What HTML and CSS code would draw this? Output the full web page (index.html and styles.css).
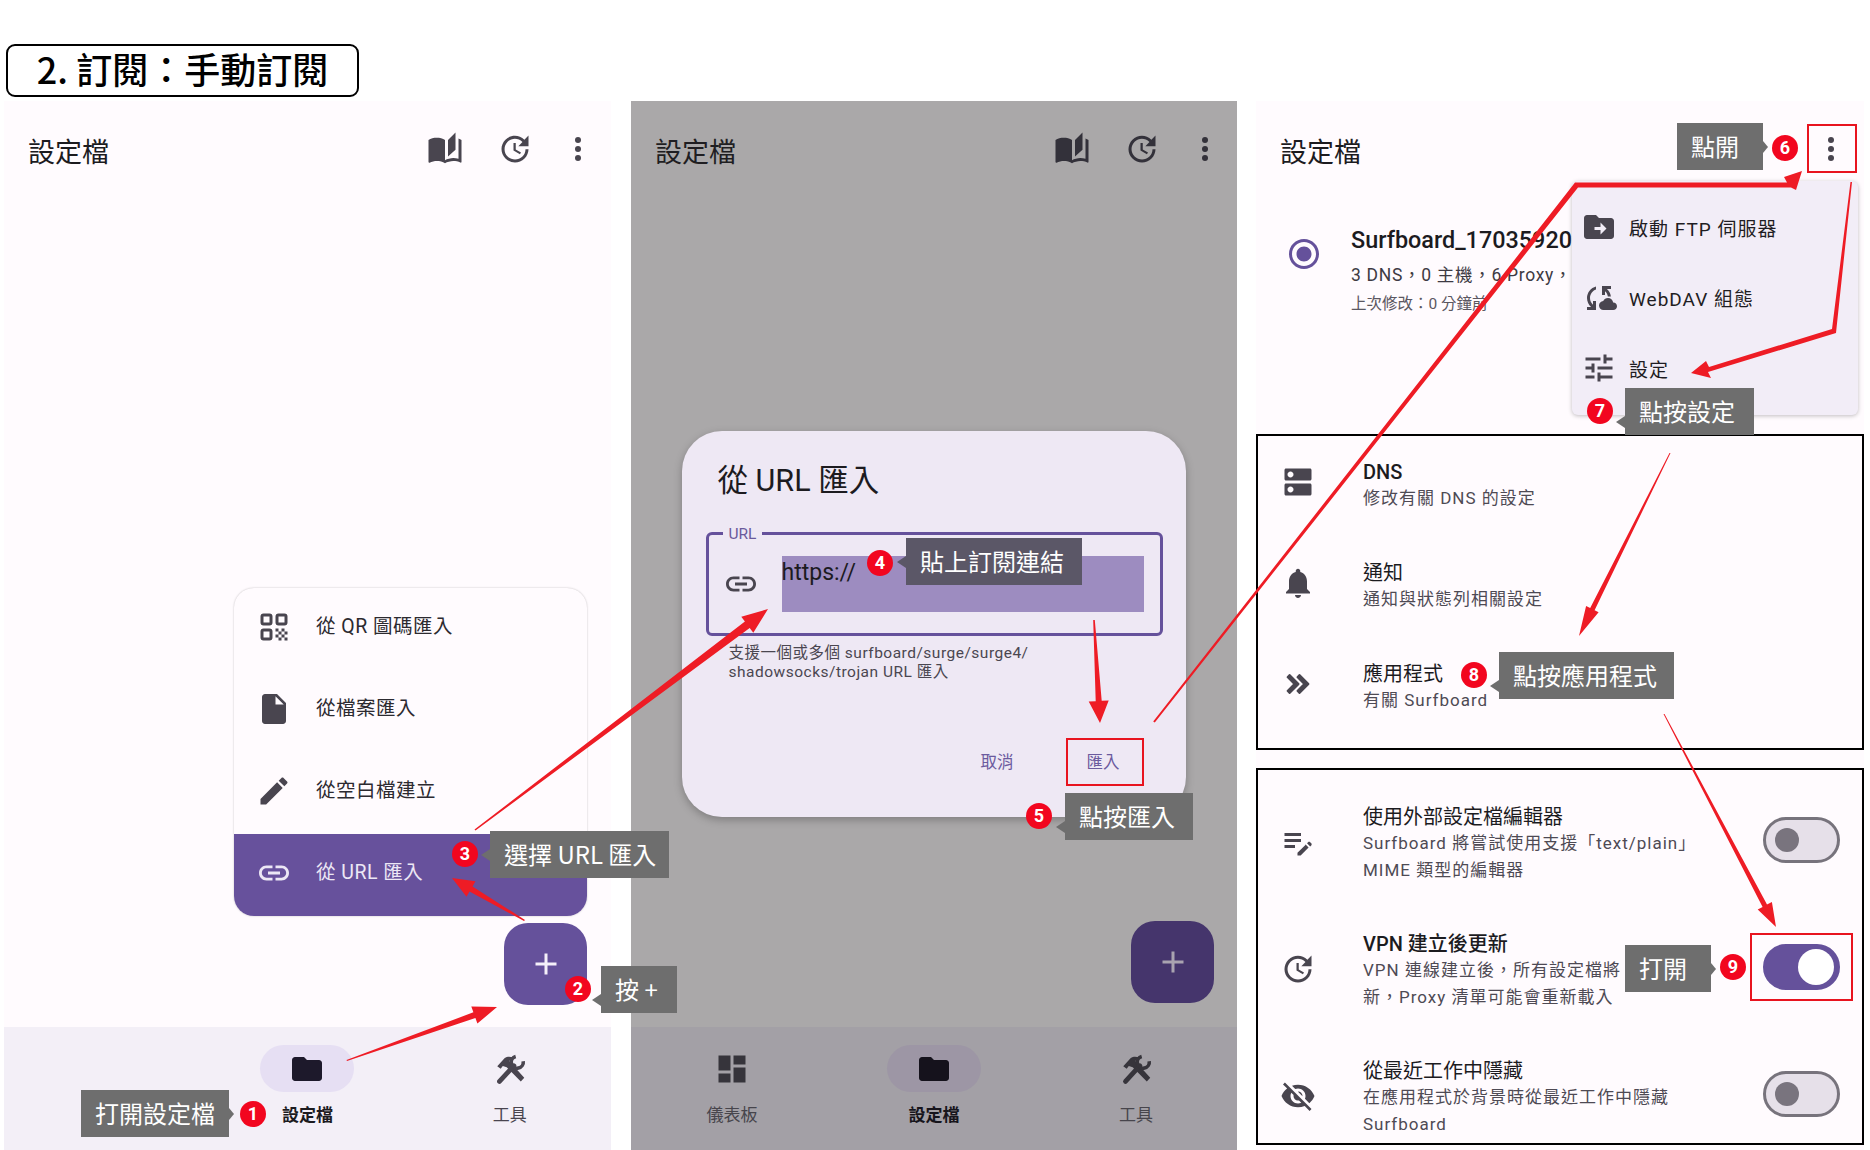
FILE: index.html
```html
<!DOCTYPE html>
<html lang="zh-Hant">
<head>
	<meta charset="utf-8">
	<title>訂閱：手動訂閱</title>
	<link rel="stylesheet" href="styles.css">
</head>
<body>
<svg class="defs" width="0" height="0">
	<symbol id="i-book" viewBox="0 0 24 24"><path d="M19 1l-5 5v11l5-4.5V1zM1 6v14.65c0 .25.25.5.5.5.1 0 .15-.05.25-.05C3.1 20.45 5.05 20 6.5 20c1.95 0 4.05.4 5.5 1.5V6c-1.45-1.1-3.55-1.5-5.5-1.5S2.45 4.9 1 6zm22 13.5V6c-.6-.45-1.25-.8-2-1.05v13.5c-1.1-.35-2.3-.5-3.5-.5-1.7 0-4.15.65-5.5 1.5v2.05c1.35-.85 3.8-1.5 5.5-1.5 1.65 0 3.35.3 4.75 1.05.1.05.15.05.25.05.25 0 .5-.25.5-.5V19.5z"/></symbol>
	<symbol id="i-update" viewBox="0 0 24 24"><path d="M21 10.12h-6.78l2.74-2.82c-2.73-2.7-7.15-2.8-9.88-.1-2.73 2.71-2.73 7.08 0 9.79s7.15 2.71 9.88 0C18.32 15.65 19 14.08 19 12.1h2c0 1.98-.88 4.55-2.64 6.29-3.51 3.48-9.21 3.48-12.72 0-3.5-3.47-3.53-9.11-.02-12.58s9.14-3.47 12.65 0L21 3v7.12zM12.5 8v4.25l3.5 2.08-.72 1.21L11 13V8h1.5z"/></symbol>
	<symbol id="i-more" viewBox="0 0 24 24"><circle cx="12" cy="6" r="2"/><circle cx="12" cy="12" r="2"/><circle cx="12" cy="18" r="2"/></symbol>
	<symbol id="i-qr" viewBox="0 0 24 24"><g fill="none" stroke="currentColor" stroke-width="2"><rect x="4" y="4" width="6" height="6" rx="1"/><rect x="14" y="4" width="6" height="6" rx="1"/><rect x="4" y="14" width="6" height="6" rx="1"/></g><path d="M13 13h2v2h-2zM17 13h2v2h-2zM15 15h2v2h-2zM19 15h2v2h-2zM13 17h2v2h-2zM17 17h2v2h-2zM15 19h2v2h-2zM19 19h2v2h-2z"/></symbol>
	<symbol id="i-file" viewBox="0 0 24 24"><path d="M6 2c-1.1 0-1.99.9-1.99 2L4 20c0 1.1.89 2 1.99 2H18c1.1 0 2-.9 2-2V8l-6-6H6zm7 7V3.5L18.5 9H13z"/></symbol>
	<symbol id="i-edit" viewBox="0 0 24 24"><path d="M3 17.25V21h3.75L17.81 9.94l-3.75-3.75L3 17.25zM20.71 7.04c.39-.39.39-1.02 0-1.41l-2.34-2.34c-.39-.39-1.02-.39-1.41 0l-1.83 1.83 3.75 3.75 1.83-1.83z"/></symbol>
	<symbol id="i-link" viewBox="0 0 24 24"><path d="M3.9 12c0-1.71 1.39-3.1 3.1-3.1h4V7H7c-2.76 0-5 2.24-5 5s2.24 5 5 5h4v-1.9H7c-1.71 0-3.1-1.39-3.1-3.1zM8 13h8v-2H8v2zm9-6h-4v1.9h4c1.71 0 3.1 1.39 3.1 3.1s-1.39 3.1-3.1 3.1h-4V17h4c2.76 0 5-2.24 5-5s-2.24-5-5-5z"/></symbol>
	<symbol id="i-plus" viewBox="0 0 24 24"><path d="M19 13h-6v6h-2v-6H5v-2h6V5h2v6h6v2z"/></symbol>
	<symbol id="i-folder" viewBox="0 0 24 24"><path d="M10 4H4c-1.1 0-1.99.9-1.99 2L2 18c0 1.1.9 2 2 2h16c1.1 0 2-.9 2-2V8c0-1.1-.9-2-2-2h-8l-2-2z"/></symbol>
	<symbol id="i-tools" viewBox="0 0 24 24"><path d="M3.5 10.2 8.5 4.6C10 3.6 12 3.6 14 4.2l-2.4 2.4.9 1.2 9 10-2.3 2.6-9.4-9.6-2.6-.8-1.4 1.8z"/><path d="M5 20.3 14.6 9.8" fill="none" stroke="currentColor" stroke-width="3.2" stroke-linecap="round"/><path d="M20.8 6.8a4 4 0 1 1-5-3.2" fill="none" stroke="currentColor" stroke-width="2.4"/></symbol>
	<symbol id="i-dash" viewBox="0 0 24 24"><path d="M3 13h8V3H3v10zm0 8h8v-6H3v6zm10 0h8V11h-8v10zm0-18v6h8V3h-8z"/></symbol>
	<symbol id="i-radio" viewBox="0 0 24 24"><path d="M12 7c-2.76 0-5 2.24-5 5s2.24 5 5 5 5-2.24 5-5-2.24-5-5-5zm0-5C6.48 2 2 6.48 2 12s4.48 10 10 10 10-4.48 10-10S17.52 2 12 2zm0 18c-4.42 0-8-3.58-8-8s3.58-8 8-8 8 3.58 8 8-3.58 8-8 8z"/></symbol>
	<symbol id="i-move" viewBox="0 0 24 24"><path d="M20 6h-8l-2-2H4c-1.1 0-1.99.9-1.99 2L2 18c0 1.1.9 2 2 2h16c1.1 0 2-.9 2-2V8c0-1.1-.9-2-2-2zm-7 11v-3H9v-2h4V9l4 4-4 4z"/></symbol>
	<symbol id="i-cloud" viewBox="0 0 24 24"><path d="M21.5 14.98c-.02 0-.03 0-.05.01C21.2 13.3 19.76 12 18 12c-1.4 0-2.6.83-3.16 2.02C13.26 14.1 12 15.4 12 17c0 1.66 1.34 3 3 3l6.5-.02c1.38 0 2.5-1.12 2.5-2.5s-1.12-2.5-2.5-2.5zM10 4.26v2.09C7.67 7.18 6 9.39 6 12c0 1.77.78 3.34 2 4.44V14h2v6H4v-2h2.73C5.06 16.54 4 14.4 4 12c0-3.73 2.55-6.85 6-7.74zM20 6h-2.73c1.43 1.26 2.41 3.01 2.66 5l-2.02.01c-.23-1.36-.93-2.55-1.91-3.46V10h-2V4h6v2z"/></symbol>
	<symbol id="i-tune" viewBox="0 0 24 24"><path d="M3 17v2h6v-2H3zM3 5v2h10V5H3zm10 16v-2h8v-2h-8v-2h-2v6h2zM7 9v2H3v2h4v2h2V9H7zm14 4v-2H11v2h10zm-6-4h2V7h4V5h-4V3h-2v6z"/></symbol>
	<symbol id="i-dns" viewBox="0 0 24 24"><path d="M20 13H4c-.55 0-1 .45-1 1v6c0 .55.45 1 1 1h16c.55 0 1-.45 1-1v-6c0-.55-.45-1-1-1zM7 19c-1.1 0-2-.9-2-2s.9-2 2-2 2 .9 2 2-.9 2-2 2zM20 3H4c-.55 0-1 .45-1 1v6c0 .55.45 1 1 1h16c.55 0 1-.45 1-1V4c0-.55-.45-1-1-1zM7 9c-1.1 0-2-.9-2-2s.9-2 2-2 2 .9 2 2-.9 2-2 2z"/></symbol>
	<symbol id="i-bell" viewBox="0 0 24 24"><path d="M12 22c1.1 0 2-.9 2-2h-4c0 1.1.89 2 2 2zm6-6v-5c0-3.07-1.64-5.64-4.5-6.32V4c0-.83-.67-1.5-1.5-1.5s-1.5.67-1.5 1.5v.68C7.63 5.36 6 7.92 6 11v5l-2 2v1h16v-1l-2-2z"/></symbol>
	<symbol id="i-chevrons" viewBox="0 0 24 24"><path d="M6.41 6 5 7.41 9.58 12 5 16.59 6.41 18l6-6z M13 6l-1.41 1.41L16.17 12l-4.58 4.59L13 18l6-6z" stroke="currentColor" stroke-width="1.2" stroke-linejoin="round"/></symbol>
	<symbol id="i-note" viewBox="0 0 24 24"><path d="M3 10h11v2H3v-2zm0-2h11V6H3v2zm0 8h7v-2H3v2zm15.01-3.13.71-.71c.39-.39 1.02-.39 1.41 0l.71.71c.39.39.39 1.02 0 1.41l-.71.71-2.12-2.12zm-1.06 1.06-5.3 5.3V21h2.12l5.3-5.3-2.12-2.12z"/></symbol>
	<symbol id="i-eye-off" viewBox="0 0 24 24"><path d="M12 7c2.76 0 5 2.24 5 5 0 .65-.13 1.26-.36 1.83l2.92 2.92c1.51-1.26 2.7-2.89 3.43-4.75-1.73-4.39-6-7.5-11-7.5-1.4 0-2.74.25-3.98.7l2.16 2.16C10.74 7.13 11.35 7 12 7zM2 4.27l2.28 2.28.46.46C3.08 8.3 1.78 10.02 1 12c1.73 4.39 6 7.5 11 7.5 1.55 0 3.03-.3 4.38-.84l.42.42L19.73 22 21 20.73 3.27 3 2 4.27zM7.53 9.8l1.55 1.55c-.05.21-.08.43-.08.65 0 1.66 1.34 3 3 3 .22 0 .44-.03.65-.08l1.55 1.55c-.67.33-1.41.53-2.2.53-2.76 0-5-2.24-5-5 0-.79.2-1.53.53-2.2zm4.31-.78l3.15 3.15.02-.16c0-1.66-1.34-3-3-3l-.17.01z"/></symbol>
</svg>

<div class="page">
	<h1 class="step-title">2. 訂閱：手動訂閱</h1>

	<div class="screens">
		<!-- screen 1: add menu -->
		<section class="screen">
			<header class="appbar">
				<span class="appbar-title">設定檔</span>
				<div class="appbar-icons">
					<svg class="icon icon-book"><use href="#i-book"/></svg>
					<svg class="icon"><use href="#i-update"/></svg>
					<svg class="icon"><use href="#i-more"/></svg>
				</div>
			</header>
			<div class="content content-end">
				<div class="add-menu">
					<div class="add-item"><svg class="icon"><use href="#i-qr"/></svg><span>從 QR 圖碼匯入</span></div>
					<div class="add-item"><svg class="icon"><use href="#i-file"/></svg><span>從檔案匯入</span></div>
					<div class="add-item"><svg class="icon"><use href="#i-edit"/></svg><span>從空白檔建立</span></div>
					<div class="add-item add-item-on"><svg class="icon"><use href="#i-link"/></svg><span>從 URL 匯入</span></div>
				</div>
				<div class="fab"><svg class="icon"><use href="#i-plus"/></svg></div>
			</div>
			<nav class="navbar">
				<div class="nav-item"></div>
				<div class="nav-item nav-item-on"><div class="nav-pill"><svg class="icon"><use href="#i-folder"/></svg></div><span>設定檔</span></div>
				<div class="nav-item"><div class="nav-pill"><svg class="icon"><use href="#i-tools"/></svg></div><span>工具</span></div>
			</nav>
		</section>

		<!-- screen 2: dialog over dim -->
		<section class="screen screen-dim">
			<header class="appbar">
				<span class="appbar-title">設定檔</span>
				<div class="appbar-icons">
					<svg class="icon icon-book"><use href="#i-book"/></svg>
					<svg class="icon"><use href="#i-update"/></svg>
					<svg class="icon"><use href="#i-more"/></svg>
				</div>
			</header>
			<div class="content content-dialog">
				<div class="dialog">
					<div class="dialog-title">從 URL 匯入</div>
					<div class="field">
						<span class="field-label">URL</span>
						<svg class="icon"><use href="#i-link"/></svg>
						<div class="field-value">https://</div>
					</div>
					<p class="field-help">支援一個或多個 surfboard/surge/surge4/<br>shadowsocks/trojan URL 匯入</p>
					<div class="dialog-actions"><span>取消</span><span>匯入</span></div>
				</div>
				<div class="fab"><svg class="icon"><use href="#i-plus"/></svg></div>
			</div>
			<nav class="navbar">
				<div class="nav-item"><div class="nav-pill"><svg class="icon"><use href="#i-dash"/></svg></div><span>儀表板</span></div>
				<div class="nav-item nav-item-on"><div class="nav-pill"><svg class="icon"><use href="#i-folder"/></svg></div><span>設定檔</span></div>
				<div class="nav-item"><div class="nav-pill"><svg class="icon"><use href="#i-tools"/></svg></div><span>工具</span></div>
			</nav>
		</section>

		<!-- screen 3: settings crops -->
		<section class="screen screen-settings">
			<header class="appbar">
				<span class="appbar-title">設定檔</span>
				<div class="appbar-icons">
					<svg class="icon"><use href="#i-more"/></svg>
				</div>
			</header>
			<div class="profile">
				<svg class="icon icon-radio"><use href="#i-radio"/></svg>
				<div class="profile-text">
					<div class="profile-name">Surfboard_1703592000</div>
					<div class="profile-sub">3 DNS，0 主機，6 Proxy，</div>
					<div class="profile-meta">上次修改：0 分鐘前</div>
				</div>
			</div>
			<div class="overflow-menu">
				<div class="overflow-item"><svg class="icon"><use href="#i-move"/></svg><span>啟動 FTP 伺服器</span></div>
				<div class="overflow-item"><svg class="icon"><use href="#i-cloud"/></svg><span>WebDAV 組態</span></div>
				<div class="overflow-item"><svg class="icon"><use href="#i-tune"/></svg><span>設定</span></div>
			</div>

			<div class="panel panel-top">
				<div class="row"><svg class="icon"><use href="#i-dns"/></svg><div class="row-text"><div class="row-title row-title-strong">DNS</div><div class="row-sub">修改有關 DNS 的設定</div></div></div>
				<div class="row"><svg class="icon"><use href="#i-bell"/></svg><div class="row-text"><div class="row-title">通知</div><div class="row-sub">通知與狀態列相關設定</div></div></div>
				<div class="row"><svg class="icon"><use href="#i-chevrons"/></svg><div class="row-text"><div class="row-title">應用程式</div><div class="row-sub">有關 Surfboard</div></div></div>
			</div>

			<div class="panel panel-bottom">
				<div class="row row-tall">
					<svg class="icon"><use href="#i-note"/></svg>
					<div class="row-text"><div class="row-title">使用外部設定檔編輯器</div><div class="row-sub">Surfboard 將嘗試使用支援「text/plain」<br>MIME 類型的編輯器</div></div>
					<div class="toggle"><span class="knob"></span></div>
				</div>
				<div class="row row-tall">
					<svg class="icon"><use href="#i-update"/></svg>
					<div class="row-text"><div class="row-title row-title-strong">VPN 建立後更新</div><div class="row-sub">VPN 連線建立後，所有設定檔將<br>新，Proxy 清單可能會重新載入</div></div>
					<div class="toggle toggle-on"><span class="knob"></span></div>
				</div>
				<div class="row row-tall">
					<svg class="icon"><use href="#i-eye-off"/></svg>
					<div class="row-text"><div class="row-title">從最近工作中隱藏</div><div class="row-sub">在應用程式於背景時從最近工作中隱藏<br>Surfboard</div></div>
					<div class="toggle"><span class="knob"></span></div>
				</div>
			</div>
		</section>
	</div>

	<!-- annotations drawn on top of the screenshots -->
	<svg class="arrows" width="1870" height="1150" viewBox="0 0 1870 1150">
		<polygon points="347,1061 475.4,1017.9 477.4,1023.6 497,1007 471.3,1006.6 473.4,1012.3 346.5,1060"/>
		<polygon points="525,920 472.5,886.4 475.5,881.2 452,878 466.5,896.8 469.5,891.6 524,921"/>
		<polygon points="475.5,830.5 749.7,627.9 753.3,632.7 768,609 741.3,616.7 744.9,621.5 474.5,829.5"/>
		<polygon points="1093.2,620 1095.7,701.2 1088.7,701.6 1100,723 1108.7,700.4 1101.7,700.8 1094.8,620"/>
		<polygon points="1153.2,721.5 1575,182.5 1787,182.5 1784,177 1802,171 1796,190 1791,187.5 1578,187.5 1154.8,722.5"/>
		<polygon points="1852,182 1836,333 1708,372 1711,378 1691,373 1706,361 1709,367 1832,329 1850.5,182"/>
		<polygon points="1670.5,453 1594.6,610.3 1598.6,612.3 1579,636 1586.1,606.1 1590.2,608.1 1669.5,453"/>
		<polygon points="1664.5,714 1767,904.6 1771.9,902.1 1776,927 1757.7,909.5 1762.6,907 1663.5,714"/>
	</svg>

	<div class="red-box red-import"></div>
	<div class="red-box red-more"></div>
	<div class="red-box red-toggle"></div>

	<div class="note note-1 point-right">打開設定檔</div><span class="badge badge-1">1</span>
	<div class="note note-2 point-left point-low">按 +</div><span class="badge badge-2">2</span>
	<div class="note note-3 point-left">選擇 URL 匯入</div><span class="badge badge-3">3</span>
	<div class="note note-4 point-left">貼上訂閱連結</div><span class="badge badge-4">4</span>
	<div class="note note-5 point-left point-low">點按匯入</div><span class="badge badge-5">5</span>
	<div class="note note-6 point-right">點開</div><span class="badge badge-6">6</span>
	<div class="note note-7 point-left point-low">點按設定</div><span class="badge badge-7">7</span>
	<div class="note note-8 point-left point-low">點按應用程式</div><span class="badge badge-8">8</span>
	<div class="note note-9 point-right">打開</div><span class="badge badge-9">9</span>
</div>
</body>
</html>
```

FILE: styles.css
```css
*{
	margin:0;
	padding:0;
	box-sizing:border-box;
}
body{
	background-color:#fff;
	font-family:Roboto,"Noto Sans CJK TC",sans-serif;
	color:#1c1b1f;
}
.defs{
	position:absolute;
}
.page{
	position:relative;
	width:1870px;
	height:1150px;
	overflow:hidden;
}
.icon{
	display:block;
	width:36px;
	height:36px;
	flex:none;
	fill:currentColor;
	color:#49454f;
}

/* title */
.step-title{
	width:353px;
	height:53px;
	margin:44px 0 4px 6px;
	padding-bottom:6px;
	border:2px solid #000;
	border-radius:9px;
	display:flex;
	align-items:center;
	justify-content:center;
	font-family:"Noto Sans CJK TC",sans-serif;
	font-size:36px;
	font-weight:500;
	line-height:1;
	color:#000;
	white-space:nowrap;
}

/* screens */
.screens{
	display:flex;
	gap:20px;
	margin-left:4px;
}
.screen{
	position:relative;
	width:607px;
	height:1049px;
	display:flex;
	flex-direction:column;
	background-color:#fffbfe;
}
.screen-dim{
	width:606px;
	background-color:#aaa8a9;
}
.screen-settings{
	width:608px;
	margin-left:-1px;
}
.appbar{
	height:100px;
	flex:none;
	display:flex;
	align-items:center;
	justify-content:space-between;
	padding:0 15px 0 24px;
}
.screen-dim .appbar{
	padding-right:14px;
}
.appbar-title{
	margin-top:4px;
	font-size:27px;
	line-height:36px;
}
.appbar-icons{
	display:flex;
	gap:27px;
	margin-top:-5px;
}
.icon-book{
	margin-right:7px;
}
.screen-dim .appbar-title{
	color:#1f1e22;
}
.screen-dim .appbar .icon{
	color:#33313a;
}
.content{
	flex:1;
	display:flex;
	flex-direction:column;
}
.content-end{
	align-items:flex-end;
	justify-content:flex-end;
	padding:0 24px 22px 0;
}
.content-dialog{
	align-items:center;
}

/* add menu */
.add-menu{
	width:353px;
	border-radius:20px;
	background-color:#fffbfe;
	box-shadow:0 0 2px rgba(0,0,0,.25);
	overflow:hidden;
}
.add-item{
	height:82px;
	display:flex;
	align-items:center;
	gap:24px;
	padding:0 0 4px 22px;
	font-size:19.5px;
	letter-spacing:.5px;
	color:#2c2a30;
}
.add-item span{
	padding-bottom:6px;
}
.add-item-on{
	background-color:#67519c;
	color:#ece7f5;
}
.add-item-on .icon{
	color:#ece7f5;
}
.fab{
	width:83px;
	height:82px;
	margin-top:7px;
	border-radius:24px;
	background-color:#65519b;
	display:flex;
	align-items:center;
	justify-content:center;
}
.fab .icon{
	color:#f5f0fa;
}
.screen-dim .fab{
	align-self:flex-end;
	margin:auto 23px 24px 0;
	background-color:#45356c;
}
.screen-dim .fab .icon{
	color:#a9a3b0;
}

/* nav */
.navbar{
	height:123px;
	flex:none;
	display:grid;
	grid-template-columns:repeat(3,1fr);
	background-color:#f3eff7;
	padding-top:18px;
}
.nav-item{
	display:flex;
	flex-direction:column;
	align-items:center;
	font-size:17px;
	line-height:24px;
	color:#49454f;
}
.nav-pill{
	width:94px;
	height:47px;
	border-radius:24px;
	display:flex;
	align-items:center;
	justify-content:center;
	margin-bottom:11px;
}
.nav-item-on{
	font-weight:700;
	color:#1c1b1f;
}
.nav-item-on .nav-pill{
	background-color:#e6dff3;
}
.nav-item-on .icon{
	color:#1d192b;
}
.screen-dim .navbar{
	background-color:#a3a0a6;
}
.screen-dim .nav-item{
	color:#47454c;
}
.screen-dim .nav-item .icon{
	color:#36343b;
}
.screen-dim .nav-item-on{
	color:#17151c;
}
.screen-dim .nav-item-on .nav-pill{
	background-color:#9d96a5;
}
.screen-dim .nav-item-on .icon{
	color:#15121c;
}

/* dialog */
.dialog{
	width:504px;
	height:386px;
	margin:230px 1px 0 0;
	padding:30px 23px 39px 24px;
	border-radius:40px;
	background-color:#eee8f4;
	box-shadow:0 3px 8px rgba(0,0,0,.25);
	display:flex;
	flex-direction:column;
}
.dialog-title{
	padding-left:12px;
	font-size:30.5px;
	line-height:40px;
}
.field{
	position:relative;
	height:104px;
	margin-top:31px;
	border:3px solid #65519b;
	border-radius:6px;
	display:flex;
	align-items:center;
	padding:0 16px 0 14px;
}
.field-label{
	position:absolute;
	left:14px;
	top:-10px;
	padding:0 6px;
	background-color:#eee8f4;
	font-size:15.5px;
	line-height:18px;
	color:#6a5a9c;
}
.field-value{
	flex:1;
	height:56px;
	margin-left:23px;
	background-color:#9d8cc0;
	font-size:23px;
	line-height:34px;
	color:#1c1b1f;
}
.field-help{
	margin-top:8px;
	padding-left:23px;
	font-size:15.5px;
	line-height:19px;
	letter-spacing:.5px;
	color:#4a4650;
}
.dialog-actions{
	margin-top:auto;
	margin-right:43px;
	display:flex;
	justify-content:flex-end;
	gap:73px;
	font-size:16.5px;
	line-height:30px;
	color:#6b5a9e;
}

/* settings screen */
.profile{
	display:flex;
	height:233px;
	padding:24px 0 0 30px;
	overflow:hidden;
}
.icon-radio{
	color:#65519b;
	margin-top:11px;
}
.profile-text{
	margin-left:29px;
	white-space:nowrap;
}
.profile-name{
	font-size:23.4px;
	font-weight:500;
	line-height:30px;
}
.profile-sub{
	margin-top:6px;
	font-size:17.5px;
	letter-spacing:.7px;
	line-height:28px;
	color:#3d3a43;
}
.profile-meta{
	font-size:15.5px;
	line-height:30px;
	color:#5b5761;
}
.overflow-menu{
	position:absolute;
	left:316px;
	top:80px;
	width:286px;
	height:234px;
	padding-top:11px;
	background-color:#f2edf7;
	border-radius:6px;
	box-shadow:0 1px 4px rgba(0,0,0,.25);
}
.overflow-item{
	height:70.5px;
	display:flex;
	align-items:center;
	gap:12px;
	padding-left:9px;
	font-size:19px;
	letter-spacing:1px;
	color:#1f1d23;
}
.panel{
	flex:none;
	width:608px;
	border:2px solid #000;
	background-color:#fffbfe;
}
.panel-top{
	height:316px;
}
.panel-top .row-text{
	margin-top:-2px;
}
.panel-top .icon{
	margin-top:-10px;
}
.panel-bottom{
	height:377px;
	margin-top:18px;
	padding-top:8px;
}
.row{
	height:101px;
	display:flex;
	align-items:center;
	padding-left:22px;
}
.row-tall{
	height:127px;
	padding-right:22px;
}
.row-tall .row-text{
	padding-top:4px;
}
.row-tall .toggle{
	margin-bottom:4px;
}
.row-text{
	flex:1;
	margin-left:47px;
}
.row-title{
	font-size:20px;
	line-height:26px;
}
.row-title-strong{
	font-weight:500;
}
.row-sub{
	font-size:17px;
	letter-spacing:1px;
	line-height:27px;
	color:#4e4a54;
}

/* toggle */
.toggle{
	width:77px;
	height:46px;
	flex:none;
	border:3px solid #77737c;
	border-radius:23px;
	background-color:#e6e0e9;
	display:flex;
	align-items:center;
	padding-left:9px;
}
.knob{
	width:24px;
	height:24px;
	border-radius:50%;
	background-color:#79747e;
}
.toggle-on{
	border-color:#65519b;
	background-color:#65519b;
	padding-left:32px;
}
.toggle-on .knob{
	width:36px;
	height:36px;
	background-color:#fff;
}

/* annotations */
.arrows{
	position:absolute;
	left:0;
	top:0;
	pointer-events:none;
}
.arrows polygon{
	fill:#ee1c25;
}
.red-box{
	position:absolute;
	border:2px solid #e8141f;
}
.red-import{left:1066px;top:738px;width:78px;height:48px;}
.red-more{left:1807px;top:124px;width:50px;height:49px;}
.red-toggle{left:1750px;top:933px;width:103px;height:68px;}

.note{
	position:absolute;
	height:47px;
	padding:0 0 3px 14px;
	display:flex;
	align-items:center;
	background-color:#6e6e6e;
	color:#fff;
	font-size:24px;
	font-family:"Noto Sans CJK TC",sans-serif;
	white-space:nowrap;
}
.note::after{
	content:"";
	position:absolute;
	top:50%;
	margin-top:-6px;
	border-top:6px solid transparent;
	border-bottom:6px solid transparent;
}
.point-left::after{
	left:-9px;
	border-right:9px solid #6e6e6e;
}
.point-right::after{
	right:-5px;
	border-left:5px solid #6e6e6e;
}
.point-low::after{
	top:72%;
}
.note-1{left:81px;top:1090px;width:148px;}
.note-2{left:601px;top:966px;width:76px;}
.note-3{left:490px;top:831px;width:179px;}
.note-4{left:906px;top:538px;width:176px;background-color:#5b5767;}
.note-4::after{border-right-color:#5b5767;}
.note-5{left:1065px;top:793px;width:128px;}
.note-6{left:1677px;top:123px;width:86px;}
.note-7{left:1625px;top:388px;width:129px;}
.note-8{left:1499px;top:652px;width:175px;}
.note-9{left:1625px;top:945px;width:86px;}

.badge{
	position:absolute;
	width:26px;
	height:26px;
	border-radius:50%;
	background-color:#f2061f;
	color:#fff;
	font-size:18px;
	font-weight:700;
	line-height:26px;
	text-align:center;
}
.badge-1{left:240px;top:1101px;}
.badge-2{left:565px;top:976px;}
.badge-3{left:452px;top:841px;}
.badge-4{left:867px;top:550px;}
.badge-5{left:1026px;top:803px;}
.badge-6{left:1772px;top:135px;}
.badge-7{left:1587px;top:398px;}
.badge-8{left:1461px;top:662px;}
.badge-9{left:1720px;top:954px;}
```
